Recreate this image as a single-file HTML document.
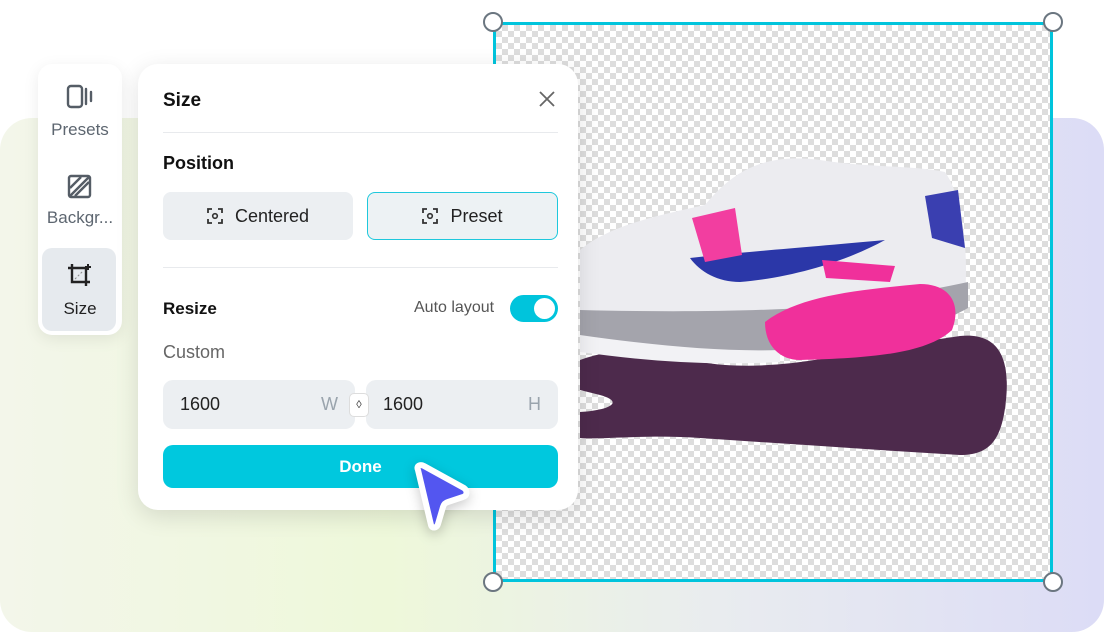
<!DOCTYPE html>
<html><head><meta charset="utf-8"><style>
body{margin:0;width:1104px;height:632px;position:relative;overflow:hidden;background:#fff;font-family:"Liberation Sans",sans-serif}
.bg{position:absolute;left:0;top:118px;width:1104px;height:514px;border-radius:32px;background:linear-gradient(90deg,#f3f6ea 0%,#eef8da 35%,#e9ecef 65%,#dcdcf6 100%)}
.frame{position:absolute;left:493px;top:22px;width:560px;height:560px;box-sizing:border-box;border:3px solid #00c4dc;
background-color:#fff;background-image:linear-gradient(45deg,#ddd 25%,transparent 25%,transparent 75%,#ddd 75%),linear-gradient(45deg,#ddd 25%,transparent 25%,transparent 75%,#ddd 75%);background-size:12px 12px;background-position:0 0,6px 6px}
.h{position:absolute;width:20px;height:20px;border-radius:50%;background:#fff;border:2px solid #6b7680;box-sizing:border-box}
.side{position:absolute;left:38px;top:64px;width:84px;height:271px;background:#fff;border-radius:14px;box-shadow:0 4px 16px rgba(0,0,0,.08)}
.si{position:absolute;left:4px;width:76px;text-align:center;font-size:17px;color:#5d6670}
.panel{position:absolute;left:138px;top:64px;width:440px;height:446px;background:#fff;border-radius:20px;box-shadow:0 6px 24px rgba(0,0,0,.12)}
.t{position:absolute;font-weight:bold;color:#111;font-size:18px}
.hr{position:absolute;left:25px;width:395px;height:1px;background:#e8eaed}
.btn{position:absolute;top:128px;height:48px;border-radius:8px;background:#eceff2;font-size:18px;color:#222;display:flex;align-items:center;justify-content:center;gap:12px;box-sizing:border-box}
.inp{position:absolute;top:316px;height:49px;background:#eceff2;border-radius:10px;font-size:18px;color:#222}
</style></head><body>
<div class="bg"></div>
<div class="frame"></div>
<svg style="position:absolute;left:496px;top:25px" width="554" height="554" viewBox="496 25 554 554">
<path d="M580 360 C620 345 660 350 700 362 C760 372 820 360 880 348 L960 336 C1000 332 1010 360 1006 400 C1002 440 990 455 960 455 L880 450 C820 446 760 442 700 438 C650 434 600 440 580 438 L580 412 C610 410 625 402 600 395 L580 390 Z" fill="#4d2a4c"/>
<path d="M580 250 C610 225 660 215 705 205 C730 175 760 152 820 160 C870 168 910 165 945 172 C965 200 968 260 965 295 C940 318 880 330 830 340 C760 352 660 345 580 335 Z" fill="#ececf0"/>
<path d="M580 310 C660 312 760 312 830 306 C880 300 930 290 968 282 L968 308 C930 330 860 345 800 352 C720 358 640 350 580 342 Z" fill="#a4a4ac"/>
<path d="M580 335 C650 345 720 352 780 350 L780 362 C700 366 640 360 580 352Z" fill="#f2f2f5"/>
<path d="M765 322 C800 295 860 290 920 284 C950 284 962 304 952 330 C928 352 880 358 800 360 C780 360 765 346 765 322Z" fill="#f0309b"/>
<path d="M690 258 C740 252 800 248 885 240 C845 262 790 278 740 282 C718 282 700 272 690 258Z" fill="#2b37a8"/>
<path d="M692 218 L735 208 L742 255 L705 262Z" fill="#f23ea0"/>
<path d="M925 196 L958 190 L965 248 L932 238Z" fill="#3a3fb0"/>
<path d="M822 260 L895 266 L890 282 L826 278Z" fill="#f0309b"/>
</svg>
<div class="h" style="left:483px;top:12px"></div><div class="h" style="left:1043px;top:12px"></div>
<div class="h" style="left:483px;top:572px"></div><div class="h" style="left:1043px;top:572px"></div>
<div class="side">
<svg style="position:absolute;left:28px;top:20px" width="30" height="26" viewBox="0 0 30 26"><rect x="2" y="2" width="14" height="21" rx="3" fill="none" stroke="#555d66" stroke-width="2.4"/><path d="M20 5v15M25 8v9" stroke="#555d66" stroke-width="2.4" stroke-linecap="round"/></svg>
<div class="si" style="top:56px">Presets</div>
<svg style="position:absolute;left:29px;top:110px" width="26" height="26" viewBox="0 0 26 26"><rect x="2" y="2" width="21" height="21" rx="2" fill="none" stroke="#555d66" stroke-width="2.4"/><path d="M3 14L14 3M8 22L22 8M3 22L22 3" stroke="#555d66" stroke-width="2.4"/></svg>
<div class="si" style="top:144px">Backgr...</div>
<div style="position:absolute;left:4px;top:184px;width:74px;height:83px;background:#e6eaee;border-radius:10px"></div>
<svg style="position:absolute;left:28px;top:198px" width="28" height="28" viewBox="0 0 28 28"><path d="M6 2v18h18M2 6h18v18" fill="none" stroke="#222" stroke-width="2.4"/><path d="M9 17l8-8" stroke="#888" stroke-width="1" stroke-dasharray="2 2"/><path d="M22 2v6M19 5h6" stroke="#222" stroke-width="2"/></svg>
<div class="si" style="top:235px;color:#222">Size</div>
</div>
<div class="panel">
<div class="t" style="left:25px;top:26px;font-size:19px">Size</div>
<svg style="position:absolute;left:400px;top:26px" width="18" height="18"><path d="M2 2l14 14M16 2L2 16" stroke="#666" stroke-width="1.8"/></svg>
<div class="hr" style="top:68px"></div>
<div class="t" style="left:25px;top:89px">Position</div>
<div class="btn" style="left:25px;width:190px"><svg width="16" height="16" viewBox="0 0 16 16"><path d="M1 5V1h4M11 1h4v4M15 11v4h-4M5 15H1v-4" fill="none" stroke="#333" stroke-width="1.8"/><circle cx="8" cy="8" r="2.3" fill="none" stroke="#333" stroke-width="1.6"/></svg>Centered</div>
<div class="btn" style="left:229px;width:191px;border:1.5px solid #1ec8dc;background:#edf2f4"><svg width="16" height="16" viewBox="0 0 16 16"><path d="M1 5V1h4M11 1h4v4M15 11v4h-4M5 15H1v-4" fill="none" stroke="#333" stroke-width="1.8"/><circle cx="8" cy="8" r="2.3" fill="none" stroke="#333" stroke-width="1.6"/></svg>Preset</div>
<div class="hr" style="top:203px"></div>
<div class="t" style="left:25px;top:235px;font-size:17px">Resize</div>
<div style="position:absolute;left:276px;top:235px;font-size:16px;color:#555">Auto layout</div>
<div style="position:absolute;left:372px;top:231px;width:48px;height:27px;border-radius:14px;background:#00c4dc"><div style="position:absolute;right:3px;top:3px;width:21px;height:21px;border-radius:50%;background:#fff"></div></div>
<div style="position:absolute;left:25px;top:278px;font-size:18px;color:#666">Custom</div>
<div class="inp" style="left:25px;width:192px"><span style="position:absolute;left:17px;top:14px">1600</span><span style="position:absolute;right:17px;top:14px;color:#9aa4ad">W</span></div>
<div class="inp" style="left:228px;width:192px"><span style="position:absolute;left:17px;top:14px">1600</span><span style="position:absolute;right:17px;top:14px;color:#9aa4ad">H</span></div>
<div style="position:absolute;left:211px;top:329px;width:20px;height:24px;background:#fff;border-radius:5px;border:1px solid #ddd;box-sizing:border-box;font-size:11px;text-align:center;line-height:22px;color:#333">◊</div>
<div style="position:absolute;left:25px;top:381px;width:395px;height:43px;border-radius:10px;background:#00c8de;color:#fff;font-size:17px;font-weight:bold;text-align:center;line-height:43px">Done</div>
</div>
<svg style="position:absolute;left:400px;top:452px;filter:drop-shadow(0 4px 6px rgba(0,0,0,.2))" width="80" height="90" viewBox="0 0 80 90"><path d="M18 18 C16 14 20 12 24 14 L64 36 C68 39 67 44 63 45 L48 50 C45 51 44 52 43 55 L38 72 C37 76 32 77 31 73 Z" fill="#5356f0" stroke="#fff" stroke-width="6" stroke-linejoin="round"/></svg>
</body></html>
